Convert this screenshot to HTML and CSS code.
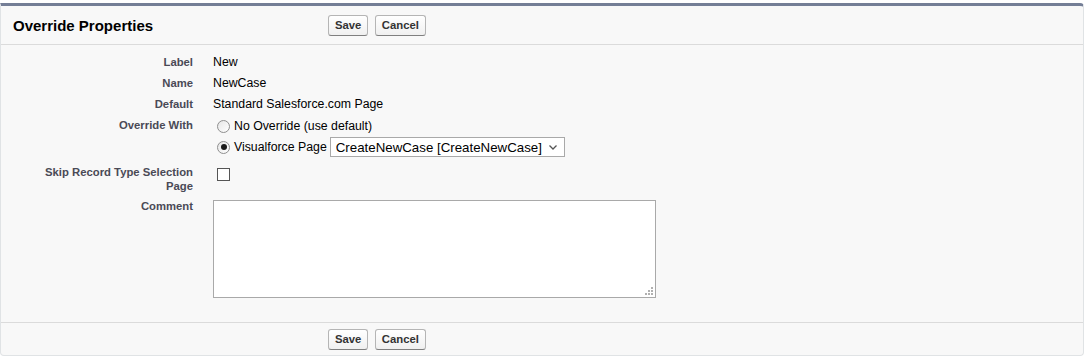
FILE: index.html
```html
<!DOCTYPE html>
<html lang="en">
<head>
  <meta charset="UTF-8">
  <title>Override Properties</title>
  <link rel="stylesheet" href="styles.css">
</head>
<body>
  <div class="page-block">
    <div class="pb-header">
      <h2 class="pb-title">Override Properties</h2>
      <div class="pb-buttons">
        <button class="btn">Save</button>
        <button class="btn">Cancel</button>
      </div>
    </div>

    <div class="pb-body">
      <div class="detail-row">
        <div class="label-col">Label</div>
        <div class="data-col">New</div>
      </div>
      <div class="detail-row">
        <div class="label-col">Name</div>
        <div class="data-col">NewCase</div>
      </div>
      <div class="detail-row">
        <div class="label-col">Default</div>
        <div class="data-col">Standard Salesforce.com Page</div>
      </div>
      <div class="detail-row override-row">
        <div class="label-col">Override With</div>
        <div class="data-col">
          <label class="option">
            <input type="radio" name="override" class="radio">
            <span>No Override (use default)</span>
          </label>
          <label class="option option-select">
            <input type="radio" name="override" class="radio" checked>
            <span>Visualforce Page</span>
            <select class="page-select">
              <option>CreateNewCase [CreateNewCase]</option>
            </select>
          </label>
        </div>
      </div>
      <div class="detail-row skip-row">
        <div class="label-col">Skip Record Type Selection Page</div>
        <div class="data-col"><input type="checkbox" class="checkbox"></div>
      </div>
      <div class="detail-row comment-row">
        <div class="label-col">Comment</div>
        <div class="data-col">
          <div class="textarea-wrap">
            <textarea class="comment"></textarea>
            <svg class="grip" width="8" height="8" viewBox="0 0 8 8">
              <rect x="6" y="0" width="2" height="2" fill="#b0b0b0"/>
              <rect x="3" y="3" width="2" height="2" fill="#b0b0b0"/>
              <rect x="6" y="3" width="2" height="2" fill="#b0b0b0"/>
              <rect x="0" y="6" width="2" height="2" fill="#b0b0b0"/>
              <rect x="3" y="6" width="2" height="2" fill="#b0b0b0"/>
              <rect x="6" y="6" width="2" height="2" fill="#b0b0b0"/>
            </svg>
          </div>
        </div>
      </div>
    </div>

    <div class="pb-footer">
      <button class="btn">Save</button>
      <button class="btn">Cancel</button>
    </div>
  </div>
</body>
</html>
```

FILE: styles.css
```css
* {
  margin: 0;
  padding: 0;
  box-sizing: border-box;
}

body {
  font-family: Arial, "Liberation Sans", sans-serif;
  font-size: 12.3px;
  color: #000;
  background-color: #fff;
  padding-top: 3px;
}

.page-block {
  width: 1084px;
  background-color: #f8f8f8;
  border: 1px solid #e0e3e5;
  border-top: 3px solid #747e96;
  border-radius: 0 4px 4px 4px;
}

/* header */
.pb-header {
  display: flex;
  align-items: center;
  height: 39px;
  padding-left: 12px;
  border-bottom: 1px solid #dbdbdb;
}

.pb-title {
  width: 315px;
  font-size: 15px;
  font-weight: bold;
  color: #000;
}

.btn {
  font-family: Arial, "Liberation Sans", sans-serif;
  font-size: 11.3px;
  font-weight: bold;
  line-height: 11px;
  color: #333;
  padding: 4px 6px;
  margin-right: 3px;
  height: 21px;
  border: 1px solid #b5b5b5;
  border-bottom-color: #7f7f7f;
  border-radius: 3px;
  background: linear-gradient(#ffffff, #f0f0f0);
  cursor: pointer;
}

/* body */
.pb-body {
  padding: 7px 0 24px;
  border-bottom: 1px solid #dbdbdb;
}

.detail-row {
  display: flex;
}

.label-col {
  width: 192px;
  padding: 4px 0 4px 30px;
  text-align: right;
  font-size: 11.3px;
  font-weight: bold;
  line-height: 13px;
  color: #4a4a56;
}

.data-col {
  padding: 4px 0 4px 20px;
  line-height: 13px;
}

.override-row .data-col {
  padding-top: 1px;
  padding-bottom: 1px;
}

.option {
  display: flex;
  align-items: center;
  height: 20px;
}

.option-select {
  height: 22px;
}

.radio {
  appearance: none;
  width: 13px;
  height: 13px;
  margin: 0 4px;
  border: 1px solid #8f8f8f;
  border-radius: 50%;
  background: linear-gradient(135deg, #e6e6e6, #ffffff);
  display: grid;
  place-items: center;
}

.radio:checked::before {
  content: "";
  width: 6px;
  height: 6px;
  border-radius: 50%;
  background-color: #1a1a1a;
}

.page-select {
  appearance: none;
  margin-left: 3px;
  width: 235px;
  height: 20px;
  padding: 0 20px 0 5px;
  font-family: Arial, "Liberation Sans", sans-serif;
  font-size: 13.3px;
  color: #000;
  border: 1px solid #a9a9a9;
  background: #fff url("data:image/svg+xml;utf8,<svg xmlns='http://www.w3.org/2000/svg' width='8' height='5' viewBox='0 0 8 5'><path d='M0.5 0.5 L4 4 L7.5 0.5' fill='none' stroke='%23555' stroke-width='1.3'/></svg>") no-repeat right 7px center;
}

.skip-row .label-col {
  padding-top: 6px;
  line-height: 14px;
}

.skip-row .data-col {
  padding-top: 9px;
}

.checkbox {
  appearance: none;
  display: block;
  width: 13px;
  height: 13px;
  margin-left: 4px;
  border: 1px solid #555;
  background-color: #fff;
}

.comment-row .label-col {
  padding-top: 2px;
  line-height: 14px;
}

.comment-row .data-col {
  padding-top: 3px;
  padding-bottom: 0;
}

.textarea-wrap {
  position: relative;
  width: 443px;
  height: 98px;
}

.comment {
  display: block;
  width: 100%;
  height: 100%;
  resize: none;
  border: 1px solid #a9a9a9;
  background-color: #fff;
}

.grip {
  position: absolute;
  right: 3px;
  bottom: 3px;
}

/* footer */
.pb-footer {
  padding: 6px 0 5px 327px;
}
```
